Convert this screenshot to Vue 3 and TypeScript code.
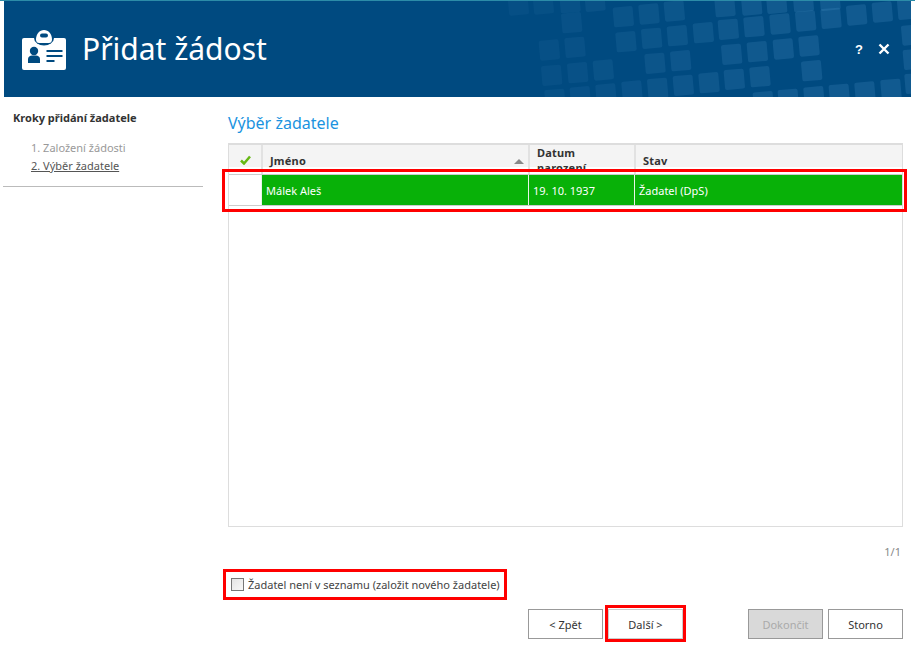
<script setup lang="ts">
const raw: [number, number][] = [
  [355,15],[430,12],[510,8],[585,4],[975,20],[1055,15],[1130,10],[1210,5],[1290,1],
  [515,68],[670,50],[747,42],[823,33],[1523,28],
  [678,125],[755,115],[832,107],[910,98],[985,88],[1062,80],[1140,72],[1217,63],[1293,55],[1370,45],[1447,36],
  [448,150],[525,142],[995,163],[1072,155],[1150,147],[1227,138],[1535,105],
  [455,226],[533,218],[610,210],[765,190],[842,182],[1235,212],[1540,178],
  [465,298],[541,290],[618,282],[696,273],[773,265],[850,256],[927,248],[1003,238],[1080,230],
  [1090,305],[1165,298],[1242,290],[1318,283],[1395,276],[1473,268],[1545,250]
]
const squares = raw.map(([zx, zy]) => {
  const x = 400 + zx / 3 - 4
  const y = zy / 3 - 1
  const t = Math.min(1, Math.max(0.04, (x - 500) / 280))
  return { x, y, o: +(0.05 + t * 0.13).toFixed(3) }
})
const columns = [
  { label: 'Jméno', sorted: true },
  { label: 'Datum narození', sorted: false },
  { label: 'Stav', sorted: false }
]
const row = ['Málek Aleš', '19. 10. 1937', 'Žadatel (DpS)']
</script>

<template>
  <div class="app">
    <div class="stripe"></div>
    <header class="banner">
      <svg class="pattern" width="907" height="96" viewBox="0 0 907 96" aria-hidden="true">
        <g v-for="(s, i) in squares" :key="i" :transform="`translate(${s.x} ${s.y}) rotate(-5)`">
          <rect x="-10" y="-10" width="20" height="20" rx="2" fill="#5fa8d8" :opacity="s.o" />
        </g>
      </svg>
      <svg class="badge" width="44" height="40" viewBox="0 0 44 40" aria-hidden="true">
        <rect x="0" y="8" width="44" height="32" rx="2" fill="#fff" />
        <ellipse cx="22" cy="8" rx="10" ry="7.5" fill="#004a80" />
        <path d="M14 9.5C14 4 17.5 0 22 0s8 4 8 9.5c0 2.5-1.5 3.5-3 3.5H17c-1.500 0-3-1-3-3.500z" fill="#fff" />
        <rect x="18" y="3.500" width="8" height="4" rx="2" fill="#004a80" />
        <circle cx="12" cy="21" r="4.200" fill="#004a80" />
        <path d="M6 33v-4c0-2 2-3.500 4-3.500h4c2 0 4 1.500 4 3.500v4c-.500 0-11.500 0-12 0z" transform="translate(0 0)" fill="#004a80" />
        <rect x="24.500" y="20" width="16" height="2" fill="#004a80" />
        <rect x="24.500" y="25" width="16" height="2" fill="#004a80" />
        <rect x="24.500" y="30" width="8" height="2" fill="#004a80" />
      </svg>
      <h1 class="title">Přidat žádost</h1>
      <div class="win-actions">
        <span class="help">?</span>
        <svg width="12" height="12" viewBox="0 0 12 12" aria-hidden="true">
          <path d="M1.500 1.500l9 9M10.500 1.500l-9 9" stroke="#fff" stroke-width="2.400" />
        </svg>
      </div>
    </header>

    <div class="body">
      <aside class="side">
        <div class="side-head">
          <h2 class="side-title">Kroky přidání žadatele</h2>
          <ol class="steps">
            <li class="step">1. Založení žádosti</li>
            <li class="step current">2. Výběr žadatele</li>
          </ol>
        </div>
      </aside>

      <main class="main">
        <h2 class="main-title">Výběr žadatele</h2>
        <section class="grid">
          <div class="grid-head">
            <div class="cell head-cell check-cell">
              <svg width="11" height="10" viewBox="0 0 11 10" aria-hidden="true">
                <path d="M1 5.500l3 3 6-7" fill="none" stroke="#66b814" stroke-width="2.500" />
              </svg>
            </div>
            <div v-for="c in columns" :key="c.label" class="cell head-cell">
              <span>{{ c.label }}</span>
              <span v-if="c.sorted" class="sort"></span>
            </div>
          </div>
          <div class="grid-row">
            <div class="cell check-cell blank"></div>
            <div v-for="(v, i) in row" :key="i" class="cell data-cell">{{ v }}</div>
            <div class="mark mark-row"></div>
          </div>
        </section>
        <div class="pager">1/1</div>
        <div class="lower">
          <label class="new-applicant">
            <span class="box"></span>
            <span>Žadatel není v seznamu (založit nového žadatele)</span>
            <span class="mark mark-check"></span>
          </label>
          <div class="buttons">
            <div class="btn-group">
              <button class="btn" type="button">&lt; Zpět</button>
              <button class="btn next" type="button">Další &gt;<span class="mark mark-next"></span></button>
            </div>
            <div class="btn-group">
              <button class="btn disabled" type="button" disabled>Dokončit</button>
              <button class="btn" type="button">Storno</button>
            </div>
          </div>
        </div>
      </main>
    </div>
  </div>
</template>

<style>
html, body { margin: 0; background: #fff; }
</style>

<style scoped>
.app {
  width: 915px;
  height: 657px;
  display: flex;
  flex-direction: column;
  overflow: hidden;
  background: #fff;
  font-family: "Noto Sans", sans-serif;
  font-size: 11px;
  color: #333;
}
.stripe { height: 1px; background: #2c8ca8; flex: none; }
.banner {
  position: relative;
  flex: none;
  height: 96px;
  margin: 0 4px;
  background: #004a80;
  display: flex;
  align-items: center;
  padding: 0 21px 0 18px;
  overflow: hidden;
}
.pattern { position: absolute; left: 0; top: 0; }
.badge { position: relative; flex: none; margin-top: 2px; }
.title {
  position: relative;
  margin: 0 0 0 16px;
  font-size: 30px;
  font-weight: 400;
  color: #fff;
  line-height: 40px;
  flex: 1;
}
.win-actions { position: relative; display: flex; align-items: center; gap: 15px; margin-right: 0; margin-top: 0; }
.help { color: #fff; font: bold 13px "Liberation Sans", sans-serif; }
.body { flex: 1; display: flex; min-height: 0; }
.side { width: 228px; flex: none; padding-left: 3px; box-sizing: border-box; }
.side-head {
  width: 200px;
  height: 90px;
  box-sizing: border-box;
  padding: 13px 0 0 10px;
  border-bottom: 1px solid #bbb;
}
.side-title { margin: 0; font-size: 11px; font-weight: 700; line-height: 15px; color: #333; }
.steps { list-style: none; margin: 14px 0 0; padding: 0 0 0 18px; }
.step { line-height: 18px; color: #999; }
.current { color: #555; text-decoration: underline; }
.main { flex: 1; padding-right: 12px; display: flex; flex-direction: column; min-width: 0; }
.main-title { margin: 15px 0 9px; font-size: 16px; font-weight: 400; line-height: 22px; color: #1a93e0; }
.grid {
  height: 384px;
  box-sizing: border-box;
  border: 1px solid #ddd;
  border-top-width: 2px;
  border-right-width: 1px;
}
.grid-head, .grid-row {
  display: grid;
  grid-template-columns: 32px 267px 106px 1fr;
}
.grid-head { height: 22px; background: #f4f4f4; }
.cell { display: flex; align-items: center; box-sizing: border-box; min-width: 0; }
.head-cell {
  font-weight: 700;
  color: #333;
  padding: 0 7px;
  border-left: 2px solid #e2e2e2;
  justify-content: space-between;
  letter-spacing: 0.2px;
}
.head-cell:first-child { border-left: 0; }
.check-cell { justify-content: center; padding: 0; }
.sort {
  width: 0;
  height: 0;
  border-left: 5px solid transparent;
  border-right: 5px solid transparent;
  border-bottom: 5px solid #888;
  margin-right: -3px;
  margin-top: 2px;
}
.grid-row {
  position: relative;
  margin-top: 7px;
  height: 32px;
  border-top: 1px solid #ccc;
  border-bottom: 1px solid #ccc;
  box-sizing: content-box;
  height: 30px;
}
.data-cell {
  background: #08b108;
  color: #fff;
  padding-left: 4px;
  border-left: 1px solid #e8f5e8;
}
.blank { background: #fff; border-left: 0; }
.mark { position: absolute; border: 3px solid #f00; box-sizing: border-box; pointer-events: none; }
.mark-row { left: -7px; right: -5px; top: -6px; bottom: -7px; }
.pager { margin-top: 17px; text-align: right; color: #888; padding-right: 2px; line-height: 15px; }
.lower { margin-top: 18px; display: flex; flex-direction: column; }
.new-applicant {
  position: relative;
  display: flex;
  align-items: center;
  gap: 4px;
  height: 15px;
  margin-left: 3px;
  width: fit-content;
  color: #444;
  margin-top: 0;
}
.box {
  width: 13px;
  height: 13px;
  border: 1px solid #777;
  background: linear-gradient(135deg, #e4e4e4, #f8f8f8);
  box-sizing: border-box;
}
.mark-check { left: -8px; right: -7px; top: -8px; bottom: -8px; }
.buttons { display: flex; justify-content: space-between; margin-top: 17px; padding-left: 300px; }
.btn-group { display: flex; gap: 5px; }
.btn {
  position: relative;
  width: 75px;
  height: 30px;
  padding: 0;
  border: 1px solid #999;
  background: #fff;
  color: #333;
  font: inherit;
}
.next { border-color: #ccc; }
.disabled { background: #d9d9d9; color: #aaa; border-color: #999; }
.mark-next { left: -4px; right: -4px; top: -5px; bottom: -4px; }
</style>
